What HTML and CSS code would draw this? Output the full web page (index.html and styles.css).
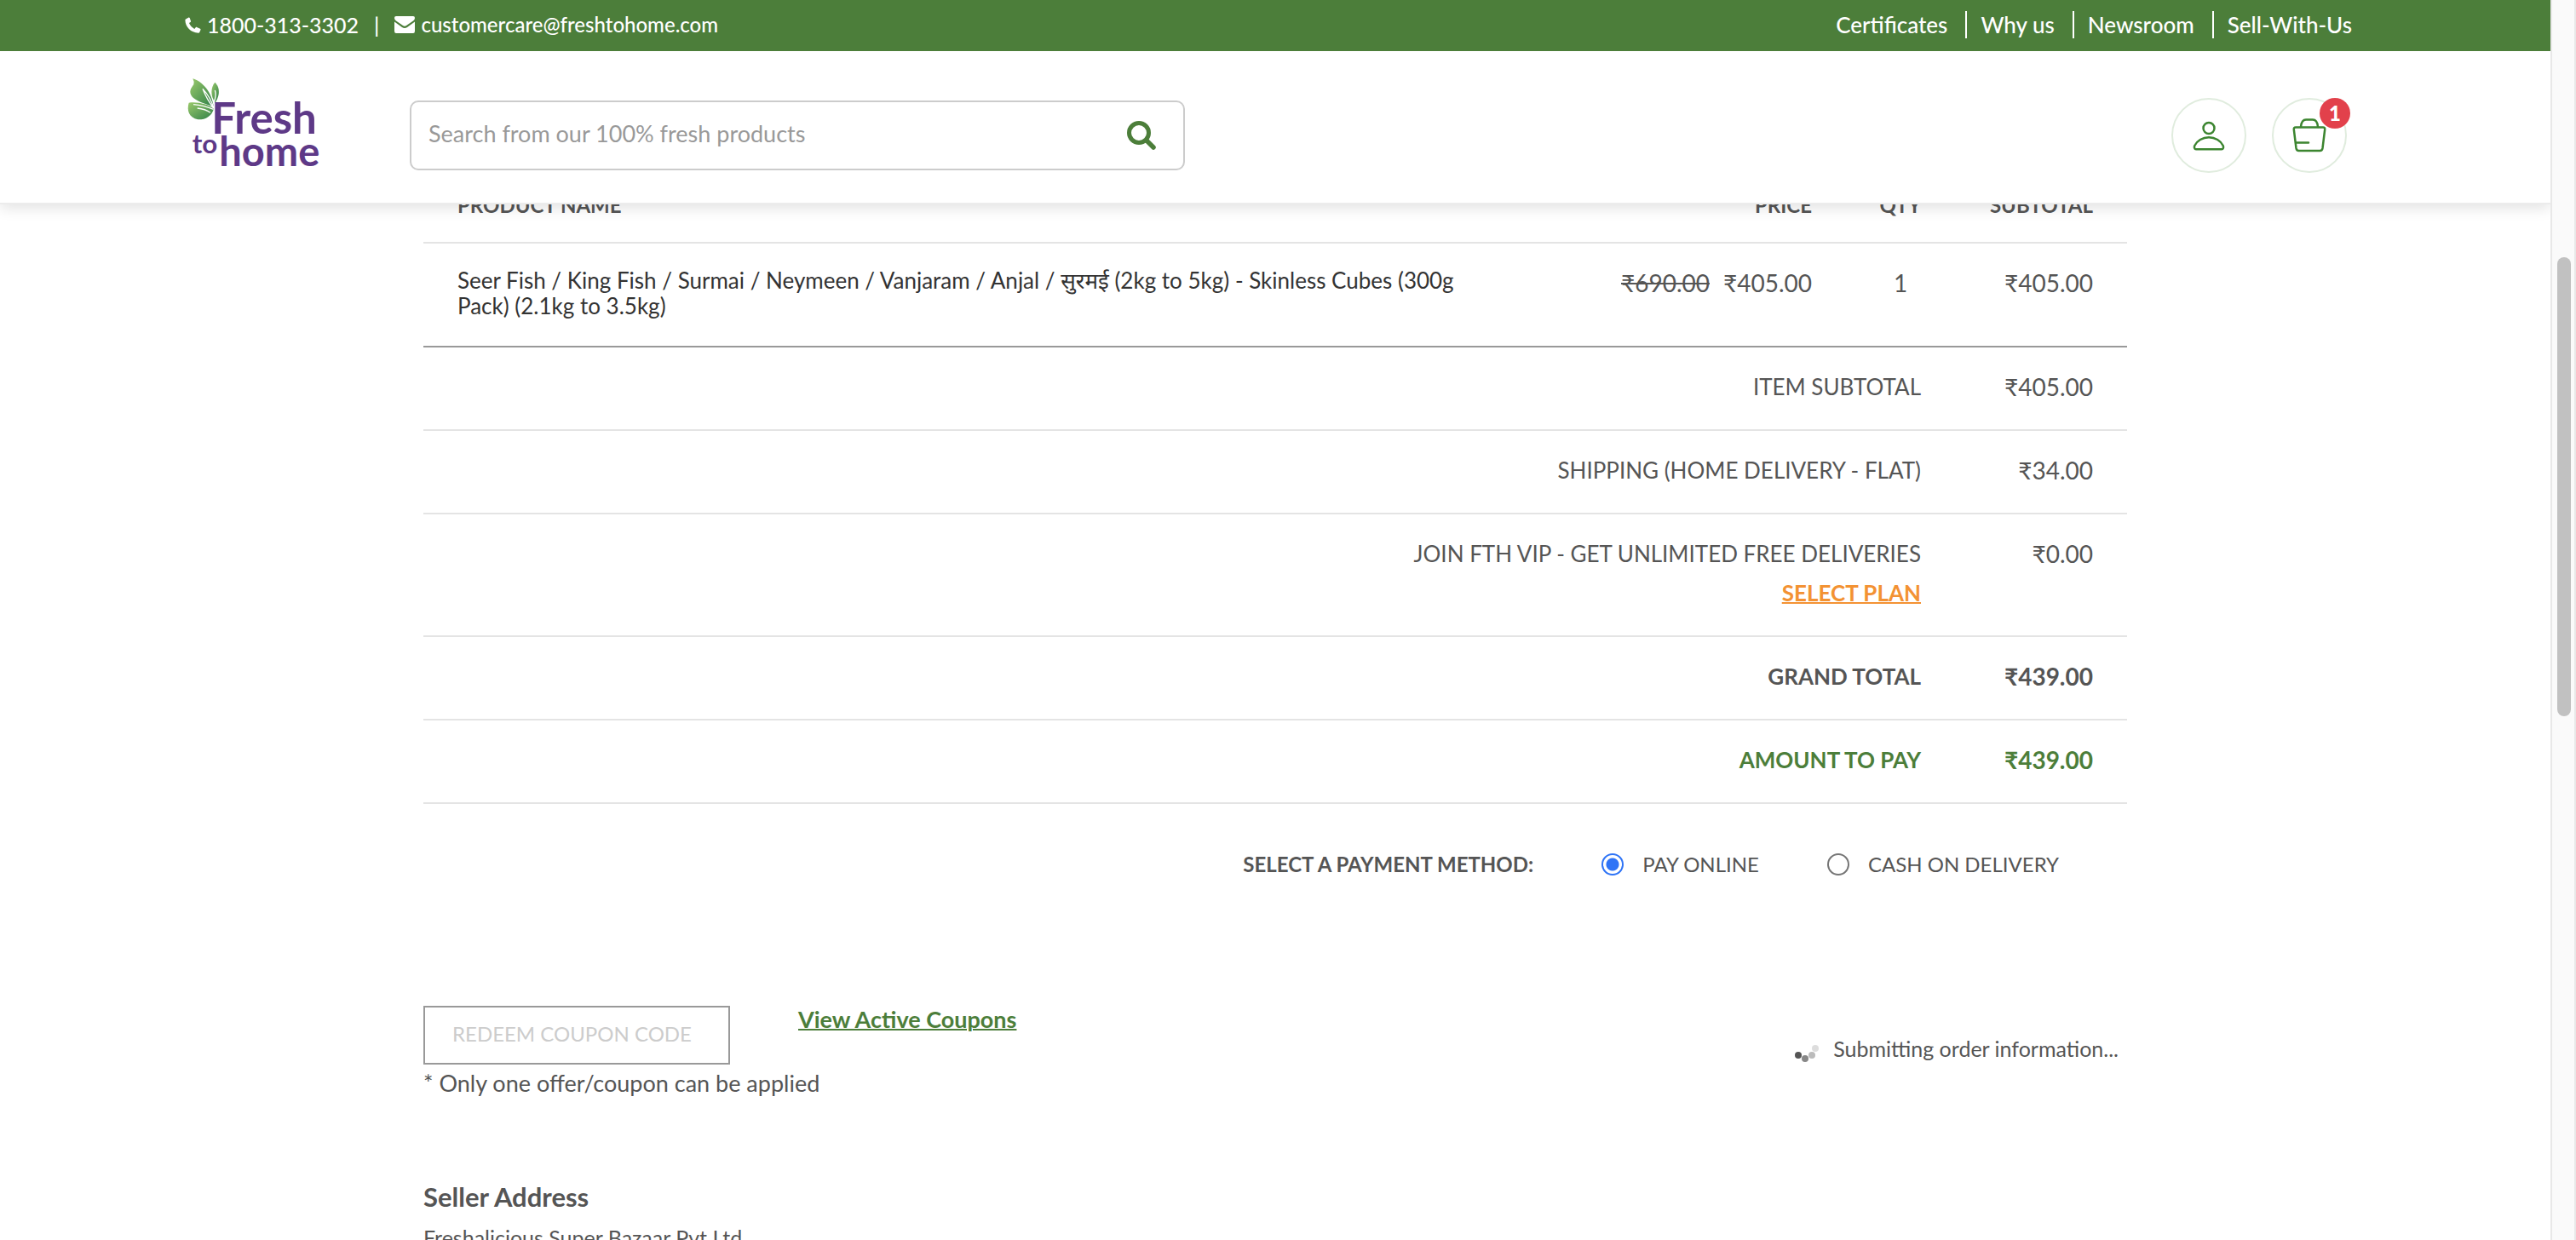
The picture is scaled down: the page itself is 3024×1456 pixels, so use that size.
FILE: index.html
```html
<!DOCTYPE html>
<html lang="en">
<head>
<meta charset="utf-8">
<title>Checkout - FreshToHome</title>
<link rel="stylesheet" href="styles.css">
</head>
<body>
<div class="page">
  <header class="header">
    <div class="topbar">
      <div class="container topbar-inner">
        <div class="contact">
          <a class="contact-link" href="tel:18003133302">
            <svg class="icon-phone" viewBox="0 0 19 19" aria-hidden="true"><path d="M1 2.500 4.500.5C5 .300 5.500.500 5.700 1L7 4.800C7.200 5.300 7 5.800 6.600 6L5 7.100C6 9.800 8.500 12.600 11.300 14L12.700 12.200C13 11.800 13.500 11.700 14 11.900L18 13.700C18.500 14 18.700 14.400 18.500 15L17.200 18C17 18.500 16.600 18.700 16 18.700 7 18.500.500 11.500.400 3.500.400 3 .600 2.700 1 2.500Z" fill="#fff"/></svg>
            <span>1800-313-3302</span>
          </a>
          <span class="contact-sep">|</span>
          <a class="contact-link contact-mail" href="mailto:customercare@freshtohome.com">
            <svg class="icon-mail" viewBox="0 0 24 20" aria-hidden="true"><path d="M2 0H22Q24 0 24 2 24 4 22 5.500L14 11Q12 12.500 10 11L2 5.500Q0 4 0 2 0 0 2 0ZM0 6.500 9 13Q12 15 15 13L24 6.500V17.500Q24 20 22 20H2Q0 20 0 17.500Z" fill="#fff"/></svg>
            <span>customercare@freshtohome.com</span>
          </a>
        </div>
        <nav class="toplinks">
          <a href="#">Certificates</a>
          <a href="#">Why us</a>
          <a href="#">Newsroom</a>
          <a href="#">Sell-With-Us</a>
        </nav>
      </div>
    </div>
    <div class="container mainbar">
      <a class="logo" href="#" aria-label="Fresh to home">
        <svg viewBox="20 30 480 360">
          <defs>
            <linearGradient id="leaf" x1="0" y1="0" x2="1" y2="1"><stop offset="0" stop-color="#9ac96b"/><stop offset="1" stop-color="#2f8048"/></linearGradient>
          </defs>
          <path d="M48 37C72 44 112 72 121 133L117 134C86 124 58 114 46 101C32 84 42 70 51 58Q54 48 48 37Z" fill="url(#leaf)"/>
          <path d="M126 50C142 66 146 92 127 122C110 98 110 70 126 50Z" fill="url(#leaf)"/>
          <path d="M34 122C66 118 102 128 122 143C114 170 92 182 66 181C34 174 26 148 34 122Z" fill="url(#leaf)"/>
          <path d="M83 73Q112 104 121 140Q98 112 83 73ZM126 78Q132 96 123 118M50 128Q88 132 121 145M64 141Q92 144 110 157" fill="none" stroke="#fff" stroke-width="4"/>
          <text class="logo-text" x="114" y="231" font-size="153">Fresh</text>
          <text class="logo-text" x="46" y="300" font-size="94">to</text>
          <text class="logo-text" x="141" y="346" font-size="141">home</text>
        </svg>
      </a>
      <form class="search">
        <input class="search-input" type="text" placeholder="Search from our 100% fresh products" aria-label="Search products">
        <button class="search-btn" type="button" aria-label="Search">
          <svg viewBox="0 0 34 34"><circle cx="14" cy="14" r="11.500" fill="none" stroke="#4c7e3a" stroke-width="5"/><path d="M23 23 31 31" stroke="#4c7e3a" stroke-width="5.500" stroke-linecap="round"/></svg>
        </button>
      </form>
      <div class="actions">
        <button class="round-btn" type="button" aria-label="Account">
          <svg viewBox="0 0 40 40" fill="none" stroke="#3c8530" stroke-width="2.500" stroke-linejoin="round"><circle cx="20" cy="11.500" r="6.500"/><path d="M5 36.200H35C37 36.200 37.500 34 36.700 32 34 26.500 27.500 22.200 20 22.200S6 26.500 3.300 32C2.500 34 3 36.200 5 36.200Z"/></svg>
        </button>
        <button class="round-btn" type="button" aria-label="Basket">
          <svg viewBox="0 0 40 40" fill="none" stroke="#3c8530" stroke-width="2.500" stroke-linejoin="round" stroke-linecap="round"><path d="M4 10.500H36Q38.500 10.500 38.200 13L35.500 35Q35 38 32.500 38H7.500Q5 38 4.500 35L1.800 13Q1.500 10.500 4 10.500Z"/><path d="M10 10C10.500 4.500 13 1.500 16 1.500H24C27 1.500 29.500 4.500 30 10M4.500 28.500H19"/></svg>
          <span class="badge">1</span>
        </button>
      </div>
    </div>
  </header>

  <main class="content">
    <table class="order">
      <colgroup><col class="col-name"><col class="col-price"><col class="col-qty"><col class="col-sub"></colgroup>
      <thead>
        <tr><th class="left">PRODUCT NAME</th><th>PRICE</th><th class="mid">QTY</th><th>SUBTOTAL</th></tr>
      </thead>
      <tbody>
        <tr class="item">
          <td class="left product">Seer Fish / King Fish / Surmai / Neymeen / Vanjaram / Anjal / सुरमई (2kg to 5kg) - Skinless Cubes (300g Pack) (2.1kg to 3.5kg)</td>
          <td class="amount"><del class="old-price">₹690.00</del>₹405.00</td>
          <td class="amount mid">1</td>
          <td class="amount">₹405.00</td>
        </tr>
      </tbody>
      <tfoot>
        <tr><td colspan="3">ITEM SUBTOTAL</td><td class="amount">₹405.00</td></tr>
        <tr><td colspan="3">SHIPPING (HOME DELIVERY - FLAT)</td><td class="amount">₹34.00</td></tr>
        <tr><td colspan="3">JOIN FTH VIP - GET UNLIMITED FREE DELIVERIES<div class="plan"><a href="#">SELECT PLAN</a></div></td><td class="amount">₹0.00</td></tr>
        <tr class="total"><td colspan="3">GRAND TOTAL</td><td class="amount">₹439.00</td></tr>
        <tr class="total pay"><td colspan="3">AMOUNT TO PAY</td><td class="amount">₹439.00</td></tr>
      </tfoot>
    </table>

    <div class="payment" role="radiogroup" aria-labelledby="pay-title">
      <strong id="pay-title">SELECT A PAYMENT METHOD:</strong>
      <label class="method"><input type="radio" name="method" checked>PAY ONLINE</label>
      <label class="method"><input type="radio" name="method">CASH ON DELIVERY</label>
    </div>

    <div class="checkout">
      <div class="coupon">
        <input class="coupon-input" type="text" placeholder="REDEEM COUPON CODE" aria-label="Coupon code">
        <p class="note">* Only one offer/coupon can be applied</p>
      </div>
      <a class="view-coupons" href="#">View Active Coupons</a>
      <div class="submitting" role="status">
        <svg class="spinner" viewBox="0 0 30 24" aria-hidden="true"><circle cx="5" cy="14" r="4" fill="#555"/><circle cx="13" cy="18" r="4" fill="#888"/><circle cx="21" cy="14" r="4" fill="#bbb"/><circle cx="25" cy="6" r="4" fill="#ddd"/></svg>
        <span>Submitting order information...</span>
      </div>
    </div>

    <section class="seller">
      <h2>Seller Address</h2>
      <p>Freshalicious Super Bazaar Pvt Ltd</p>
    </section>
  </main>
</div>
<div class="scrollbar" aria-hidden="true"><div class="thumb"></div></div>
</body>
</html>
```
FILE: styles.css
```css
* { box-sizing: border-box; }

body {
  margin: 0;
  height: 100vh;
  overflow: hidden;
  display: grid;
  grid-template-columns: minmax(0, 1fr) 30px;
  background: #fff;
  color: #555;
  font-family: Lato, "Noto Sans", "Liberation Sans", sans-serif;
  font-size: 25px;
  line-height: 36px;
}

.page { height: 100vh; overflow: hidden; }

.container {
  max-width: 2560px;
  margin: 0 auto;
  padding-right: 16px;
  display: flex;
}

/* Header */
.header {
  position: relative;
  z-index: 1;
  background: #fff;
  border-bottom: 2px solid #ececec;
  box-shadow: 0 4px 16px rgba(0, 0, 0, 0.12);
}

.topbar { background: #4c7e3a; color: #fff; font-weight: 500; }
.topbar a { color: #fff; text-decoration: none; }
.topbar-inner { height: 60px; padding-bottom: 2px; align-items: center; justify-content: space-between; }

.contact { display: flex; align-items: center; gap: 18px; }
.contact-link { display: flex; align-items: center; gap: 7px; }
.contact-mail { font-size: 24px; }
.icon-phone { width: 19px; height: 19px; }
.icon-mail { width: 24px; height: 20px; }

.toplinks { display: flex; align-items: center; font-size: 26px; }
.toplinks a { line-height: 32px; padding: 0 21px 0 16px; border-right: 2px solid #fff; }
.toplinks a:last-child { padding-right: 0; border-right: 0; }

.mainbar { height: 178px; padding-top: 30px; padding-bottom: 10px; align-items: center; }

.logo { align-self: flex-start; width: 160px; height: 120px; }
.logo svg { display: block; width: 100%; height: 100%; }
.logo-text { font-weight: 700; fill: #5e3987; }

.search {
  display: flex;
  align-items: center;
  width: 910px;
  height: 82px;
  margin-left: 104px;
  padding: 0 32px 0 20px;
  border: 2px solid #ccc;
  border-radius: 10px;
}
.search-input {
  flex: 1;
  min-width: 0;
  padding: 0 0 4px;
  border: 0;
  outline: 0;
  background: none;
  color: #555;
  font: 27px/36px Lato, sans-serif;
}
.search-input::placeholder { color: #999; opacity: 1; }
.search-btn { padding: 0; border: 0; background: none; }
.search-btn svg { display: block; width: 34px; height: 34px; }

.actions { display: flex; gap: 30px; margin-left: auto; padding-right: 6px; }
.round-btn {
  position: relative;
  display: grid;
  place-items: center;
  width: 88px;
  height: 88px;
  padding: 0;
  border: 2px solid #e0ecde;
  border-radius: 50%;
  background: #fff;
}
.round-btn svg { width: 40px; height: 40px; }
.badge {
  position: absolute;
  top: -2px;
  right: -6px;
  width: 36px;
  border-radius: 50%;
  background: #e2414b;
  color: #fff;
  font: 900 24px/36px Lato, sans-serif;
  text-align: center;
}

/* Order table, scrolled part way under the header */
.content { max-width: 2000px; margin: -40px auto 0; }

.order { width: 100%; table-layout: fixed; border-collapse: separate; border-spacing: 0; }
.col-name { width: 63.4%; }
.col-price { width: 20.1%; }
.col-qty { width: 6.4%; }
.col-sub { width: 10.1%; }
.order th,
.order td {
  padding: 28px 40px 32px;
  border-bottom: 2px solid #e4e4e4;
  font-size: 26px;
  text-align: right;
  vertical-align: top;
}
.order th { padding-top: 29px; padding-bottom: 31px; font-size: 24px; line-height: 24px; white-space: nowrap; }
.order .left { text-align: left; }
.order .mid { padding-left: 0; padding-right: 0; text-align: center; }
.order .item td { border-bottom-color: #999; }
.order .item .product { color: #333; line-height: 30px; }
.order .amount { padding-left: 0; font-size: 28px; }
.old-price { margin-right: 16px; }
.plan { margin-top: 10px; }
.plan a { color: #f39233; font-weight: 700; text-decoration-thickness: 2px; }
.order .total td { font-weight: 700; }
.pay td { color: #4c7e3a; }

/* Payment method */
.payment {
  display: flex;
  justify-content: flex-end;
  align-items: center;
  gap: 80px;
  padding: 53px 80px 0 0;
  font-size: 24px;
}
.method { display: flex; align-items: center; gap: 22px; }
.method input {
  appearance: none;
  width: 26px;
  height: 26px;
  margin: 0;
  border: 2px solid #767676;
  border-radius: 50%;
  background: #fff;
}
.method input:checked {
  border-color: #2f74f6;
  background: radial-gradient(circle, #2f74f6 7px, #fff 8px);
}

/* Coupon and order status */
.checkout { display: flex; align-items: flex-start; padding-top: 148px; }
.coupon { width: 360px; }
.coupon-input {
  display: block;
  width: 100%;
  height: 69px;
  padding: 0 32px 4px;
  border: 2px solid #999;
  border-radius: 0;
  font: 24px/36px Lato, sans-serif;
}
.coupon-input::placeholder { color: #ccc; opacity: 1; }
.note { margin: 4px 0 0; font-size: 27px; white-space: nowrap; }
.view-coupons {
  margin-left: 80px;
  color: #4c7e3a;
  font-size: 27px;
  font-weight: 700;
  line-height: 32px;
  text-decoration-thickness: 2px;
}
.submitting { display: flex; align-items: center; gap: 16px; margin-left: auto; padding: 32px 10px 0 0; }
.spinner { width: 30px; height: 24px; margin-top: 12px; }

/* Seller */
.seller { padding-top: 95px; }
.seller h2 { margin: 0 0 10px; font-size: 31px; line-height: 40px; }
.seller p { margin: 0; }

/* Page scrollbar */
.scrollbar {
  padding: 302px 4px 0 6px;
  border: solid #e8e8e8;
  border-width: 0 2px;
  background: #fafafa;
}
.thumb { width: 16px; height: 37vh; border-radius: 8px; background: #c1c1c1; }
```
